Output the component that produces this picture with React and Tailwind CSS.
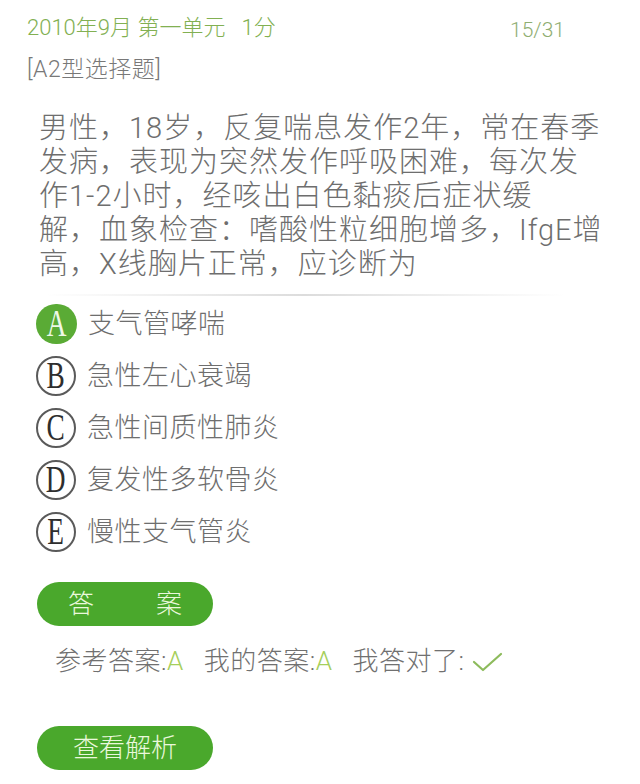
import React from "react";

const sans = { fontFamily: 'Roboto, "Noto Sans CJK SC", sans-serif' };

const lines = [
  "男性，18岁，反复喘息发作2年，常在春季",
  "发病，表现为突然发作呼吸困难，每次发",
  "作1-2小时，经咳出白色黏痰后症状缓",
  "解，血象检查：嗜酸性粒细胞增多，IfgE增",
  "高，X线胸片正常，应诊断为",
];

const options = [
  ["A", "支气管哮喘"],
  ["B", "急性左心衰竭"],
  ["C", "急性间质性肺炎"],
  ["D", "复发性多软骨炎"],
  ["E", "慢性支气管炎"],
];

function Letter({ l, active }) {
  return (
    <div
      className={
        active
          ? "w-[41px] h-[40px] rounded-full bg-[#5aab35] flex items-center justify-center shrink-0"
          : "w-[40px] h-[40px] rounded-full border-2 border-[#5a5a5a] bg-white flex items-center justify-center shrink-0"
      }
    >
      <span
        className={
          (active ? "text-[#eef8e6]" : "text-[#2e2e2e]") +
          " text-[38px] leading-none inline-block scale-x-[0.72] -mt-[2px]"
        }
        style={{ fontFamily: '"Liberation Serif", "DejaVu Serif", serif' }}
      >
        {l}
      </span>
    </div>
  );
}

export default function App() {
  return (
    <div className="w-[640px] h-[784px] bg-white overflow-hidden font-light" style={sans}>
      <div className="flex pt-[14px] pl-[27px] pr-[75px] h-[42px]">
        <div className="text-[22px] leading-[28px] text-[#82b052] whitespace-nowrap">
          2010年9月 第一单元&nbsp;&nbsp;&nbsp;1分
        </div>
        <div className="ml-auto text-[21px] leading-[28px] mt-[2px] text-[#8fae72]">15/31</div>
      </div>
      <div className="mt-[13px] pl-[27px] text-[23px] leading-[30px] tracking-[0.5px] text-[#787878]">[A2型选择题]</div>
      <div className="mt-[26px] pl-[39px] text-[29px] leading-[34px] tracking-[1px] text-[#6e6e6e]">
        {lines.map((t) => (
          <div key={t} className="whitespace-nowrap">
            {t}
          </div>
        ))}
      </div>
      <div className="mt-[13px] ml-[45px] w-[520px] h-[2px] bg-gradient-to-r from-transparent via-[#dcdcdc] to-transparent" />
      <div className="mt-[2px] pl-[36px]">
        {options.map(([l, t], i) => (
          <div key={l} className="h-[52px] flex items-center">
            <Letter l={l} active={i === 0} />
            <span className="ml-[11px] text-[27px] tracking-[0.5px] text-[#6e6e6e] whitespace-nowrap">{t}</span>
          </div>
        ))}
      </div>
      <div className="mt-[24px] ml-[37px] w-[176px] h-[44px] rounded-full bg-[#4aa82c] flex items-center justify-between px-[31px] text-[26px] text-[#eaf8dc]">
        <span>答</span>
        <span>案</span>
      </div>
      <div className="mt-[20px] pl-[55px] flex items-center h-[30px] text-[26px] tracking-[0.5px] text-[#707070] whitespace-nowrap">
        <span>参考答案:</span>
        <span className="text-[#a6cf5c]">A</span>
        <span className="ml-[20px]">我的答案:</span>
        <span className="text-[#a6cf5c]">A</span>
        <span className="ml-[20px]">我答对了:</span>
        <svg className="ml-[8px] mt-[2px]" width="32" height="22" viewBox="0 0 32 22">
          <polyline points="2,11 11,19 29,3" fill="none" stroke="#8dbb5c" strokeWidth="2.2" strokeLinecap="round" strokeLinejoin="round" />
        </svg>
      </div>
      <div className="mt-[50px] ml-[37px] w-[176px] h-[44px] rounded-full bg-[#4aa82c] flex items-center justify-center text-[26px] text-[#eaf8dc]">
        查看解析
      </div>
    </div>
  );
}
